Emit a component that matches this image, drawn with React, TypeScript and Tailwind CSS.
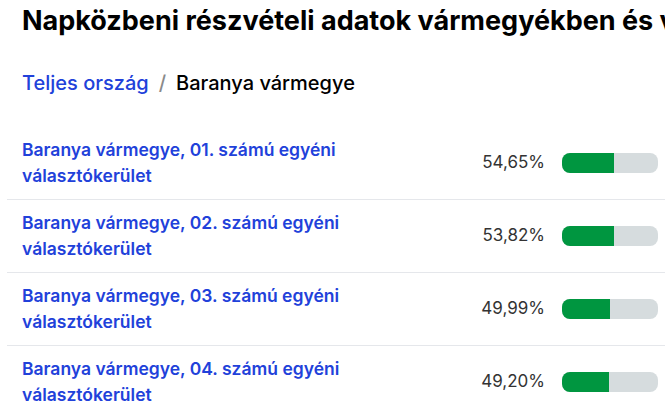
import React from 'react';

function App() {
  const rows = [
    { name: "Baranya vármegye, 01. számú egyéni választókerület", value: 54.65 },
    { name: "Baranya vármegye, 02. számú egyéni választókerület", value: 53.82 },
    { name: "Baranya vármegye, 03. számú egyéni választókerület", value: 49.99 },
    { name: "Baranya vármegye, 04. számú egyéni választókerület", value: 49.2 },
  ];

  return (
    <div className="w-[665px] h-[417px] overflow-hidden bg-white font-['Inter',sans-serif]">
      <h1 className="pl-[22px] pt-[3px] text-[27px] leading-[36px] font-bold text-black whitespace-nowrap">
        Napközbeni részvételi adatok vármegyékben és választókerületekben
      </h1>

      {/* Breadcrumb */}
      <div className="pl-[22px] mt-[30px] flex items-center text-[20px] leading-[28px] font-medium">
        <a className="text-[#2141da]">Teljes ország</a>
        <span className="mx-[10px] text-[#8a8a8a]">/</span>
        <span className="text-black">Baranya vármegye</span>
      </div>

      {/* List */}
      <div className="ml-[7px] mt-[30px]">
        {rows.map((row, index) => (
          <div
            key={index}
            className="flex items-center pl-[15px] pr-[7px] pt-[10px] pb-[10px] border-b border-[#e5e7eb]"
          >
            <a className="w-[340px] text-[17.5px] leading-[26px] font-semibold text-[#2141da]">
              {row.name}
            </a>
            <span className="ml-auto text-[17px] text-[#333] mr-[17px]">
              {row.value.toFixed(2).replace('.', ',')}%
            </span>
            <div className="w-[96px] h-[20px] rounded-[8px] bg-[#d6dcde] overflow-hidden">
              <div className="h-full bg-[#009640]" style={{ width: `${row.value}%` }} />
            </div>
          </div>
        ))}
      </div>
    </div>
  );
}

export default App;
